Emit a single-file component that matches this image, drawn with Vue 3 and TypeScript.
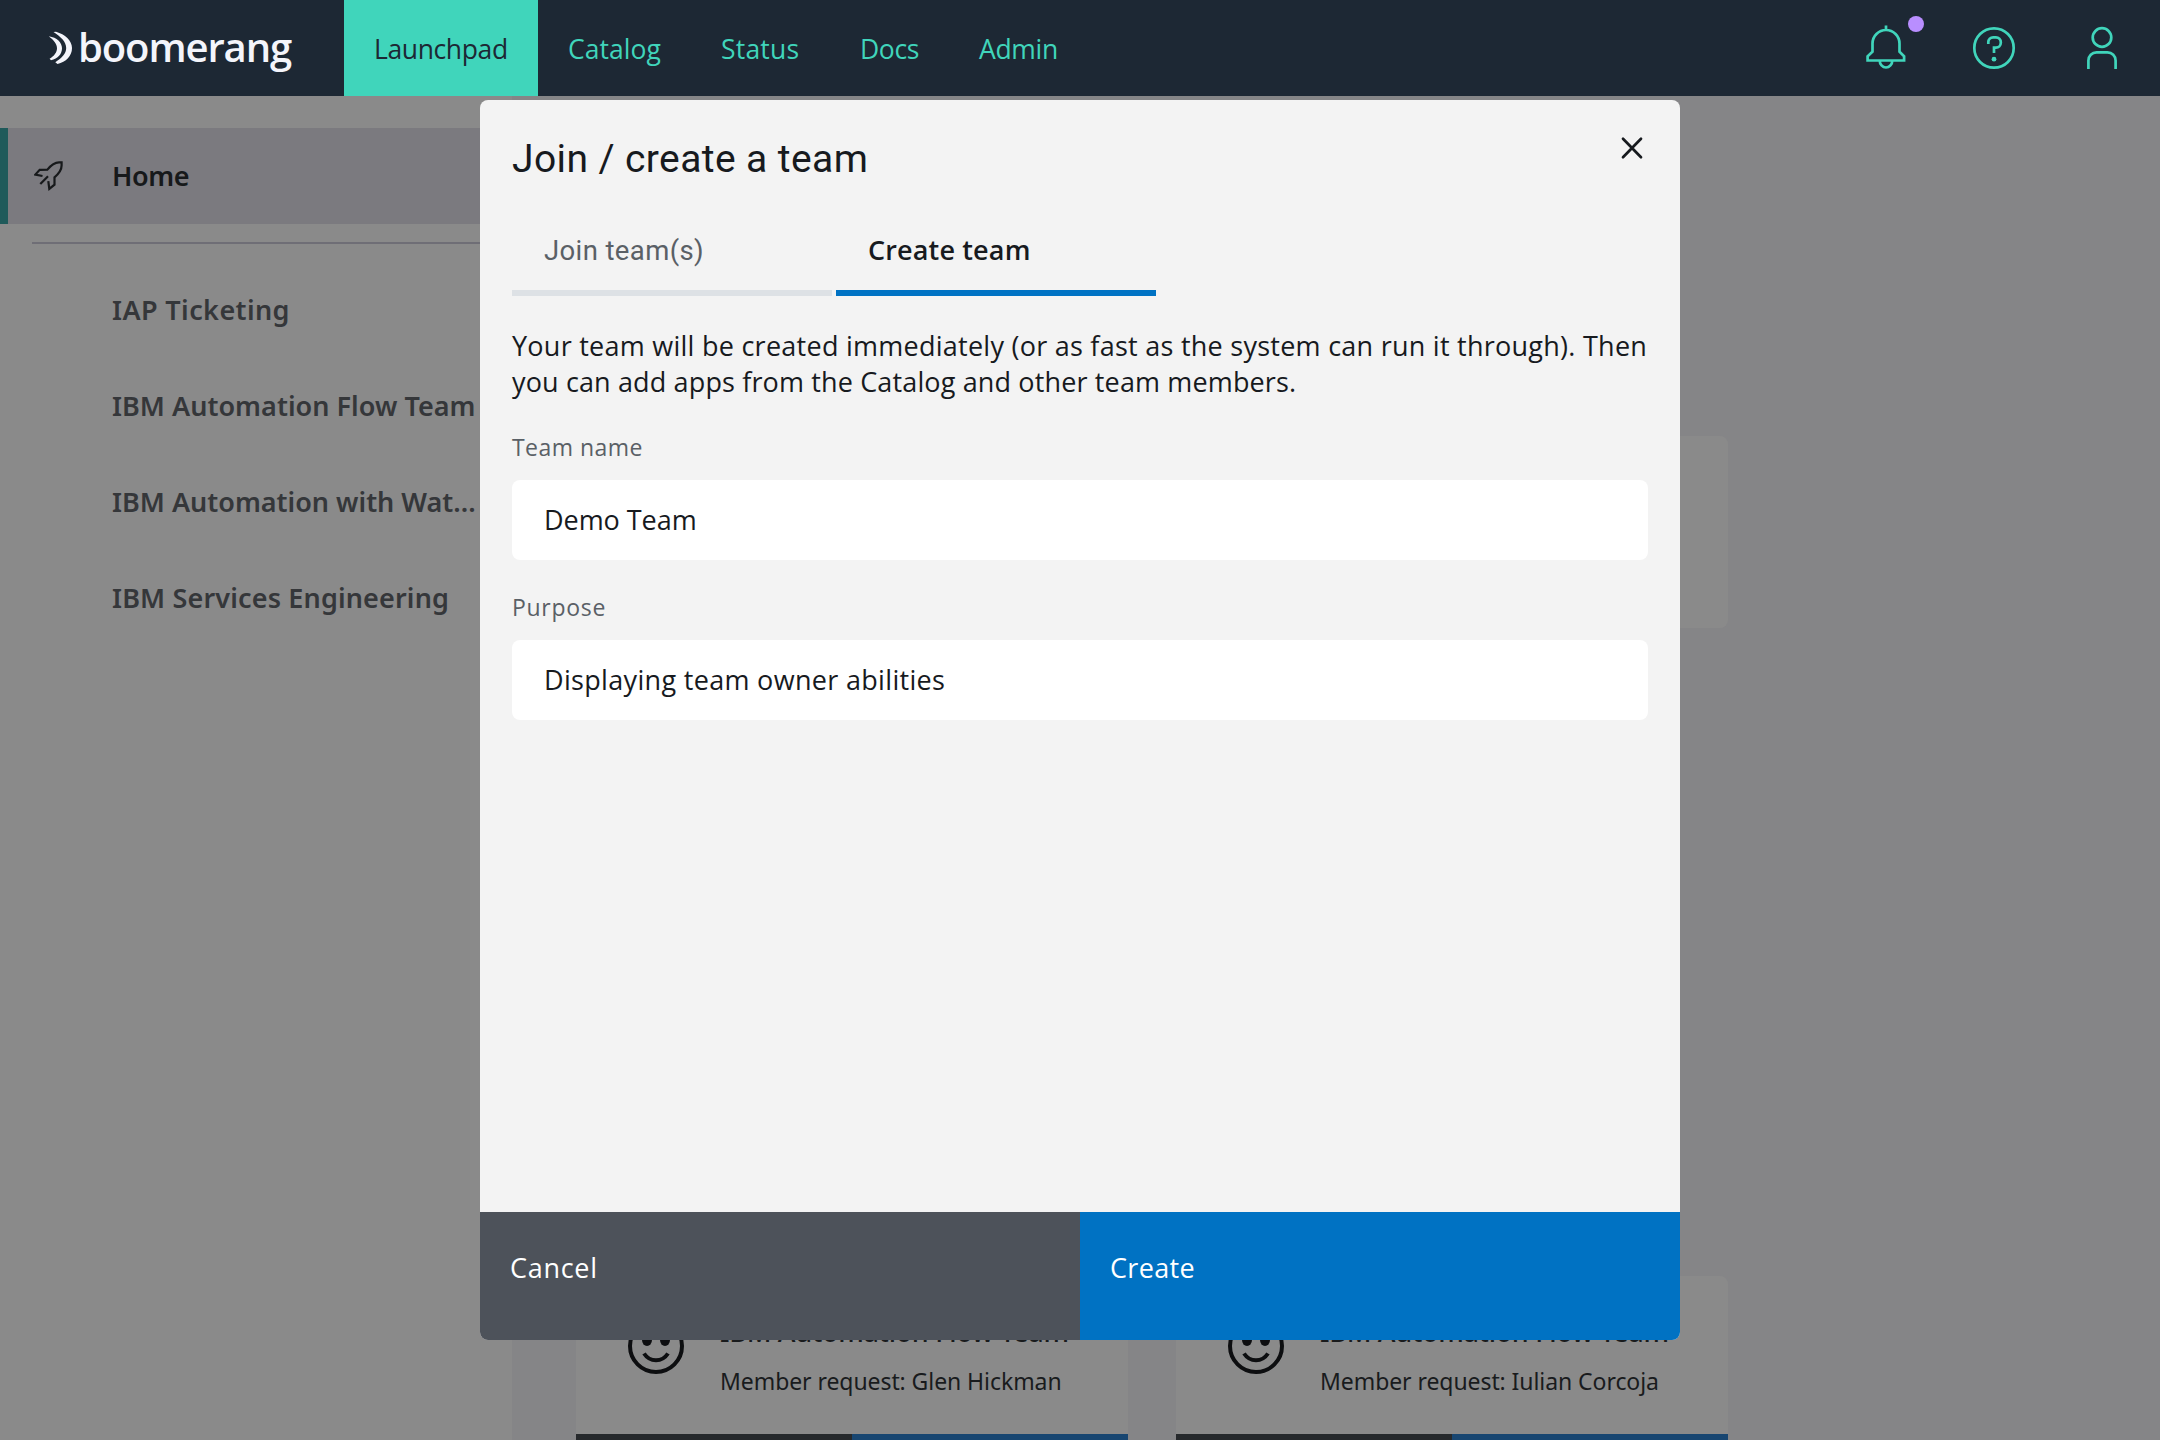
<script setup lang="ts">
import { ref } from 'vue'

interface Label {
  text: string
  tracking: number
}

const navItems: (Label & { width: number })[] = [
  { text: 'Launchpad', tracking: -0.38, width: 194 },
  { text: 'Catalog', tracking: 0.05, width: 153 },
  { text: 'Status', tracking: 0.2, width: 139 },
  { text: 'Docs', tracking: -0.37, width: 119 },
  { text: 'Admin', tracking: -0.3, width: 140 },
]

const teams: Label[] = [
  { text: 'IAP Ticketing', tracking: 0.4 },
  { text: 'IBM Automation Flow Team', tracking: 0.03 },
  { text: 'IBM Automation with Wat...', tracking: 0 },
  { text: 'IBM Services Engineering', tracking: 0.15 },
]

const requests = ['Member request: Glen Hickman', 'Member request: Iulian Corcoja']

const intro: Label[] = [
  {
    text: 'Your team will be created immediately (or as fast as the system can run it through). Then',
    tracking: 0.256,
  },
  { text: 'you can add apps from the Catalog and other team members.', tracking: 0.14 },
]

const fields = ref([
  { id: 'name', label: 'Team name', labelTracking: 0.45, value: 'Demo Team', tracking: -0.05 },
  { id: 'purpose', label: 'Purpose', labelTracking: 0.7, value: 'Displaying team owner abilities', tracking: 0.32 },
])

const spacing = (px: number) => ({ letterSpacing: `${px}px` })
</script>

<template>
  <div class="app">
    <header class="header">
      <div class="brand">
        <svg class="brand-mark" width="26" height="34" viewBox="0 0 26 34">
          <path d="M5.500 .9L8 .8C17 3.500 24 9.500 24 17C24 25 18 31 9.500 33L7.300 31.200C14 27 18.200 22.500 18.200 17C18.200 10.500 12.500 5.500 5.500 .9Z" />
          <path d="M.8 5.200C9 6.500 14 11.500 14 17.200C14 23 10 27.500 3 29.200L1.600 27.800C6 25 9 21.500 9 17.200C9 12.500 5.500 9 .8 5.200Z" />
        </svg>
        <span class="brand-name">boomerang</span>
      </div>
      <nav class="nav">
        <a
          v-for="(item, i) in navItems"
          :key="item.text"
          class="nav-item"
          :class="{ active: i === 0 }"
          :style="{ width: `${item.width}px`, letterSpacing: `${item.tracking}px` }"
        >{{ item.text }}</a>
      </nav>
      <div class="tools">
        <button class="tool" aria-label="Notifications">
          <svg width="48" height="48" viewBox="0 0 48 48">
            <path d="M24 1.500V6M10.500 19.500a13.500 13.500 0 0 1 27 0V27.700l4.600 4.700V36.500H5.600V32.400l4.900-4.700ZM17.700 36.500a6.200 6.900 0 0 0 12.600 0" />
          </svg>
          <span class="dot"></span>
        </button>
        <button class="tool" aria-label="Help">
          <svg width="48" height="48" viewBox="0 0 48 48">
            <circle cx="24" cy="24" r="19.700" />
            <path d="M18.300 20V18.200a4.900 4.900 0 0 1 4.900-4.900h2.700a4.900 4.900 0 0 1 4.900 4.900v.6a4.900 4.900 0 0 1-4.900 4.900H24v5.300" />
            <circle class="fill" cx="24" cy="35.200" r="2.400" />
          </svg>
        </button>
        <button class="tool" aria-label="Profile">
          <svg width="48" height="48" viewBox="0 0 48 48">
            <circle cx="24" cy="13.500" r="9.300" />
            <path d="M10.400 45V36.400a8.100 8.100 0 0 1 8.100-8.100h11a8.100 8.100 0 0 1 8.100 8.100V45" />
          </svg>
        </button>
      </div>
    </header>

    <div class="body">
      <aside class="sidebar">
        <a class="home">
          <svg class="rocket" width="30" height="30" viewBox="0 0 30 30">
            <path d="M8.500 15L1.300 13.600L5.700 8.800L13.400 8.600C17.500 3.500 21 1.300 25 1.300H27.600V4.500C27.600 9 25 12.500 20.500 16.300V23.600L15.300 27.800L14.300 20.200" />
            <path d="M14 15.300L6.300 23" />
          </svg>
          <span>Home</span>
        </a>
        <hr class="rule" />
        <a v-for="team in teams" :key="team.text" class="team" :style="spacing(team.tracking)">{{ team.text }}</a>
      </aside>

      <main class="main">
        <section class="panel"></section>
        <section class="requests">
          <article v-for="request in requests" :key="request" class="card">
            <div class="card-body">
              <svg class="smiley" width="60" height="60" viewBox="0 0 60 60">
                <circle cx="30" cy="30" r="26" />
                <ellipse class="eye" cx="21" cy="24" rx="5" ry="6" />
                <ellipse class="eye" cx="39" cy="24" rx="5" ry="6" />
                <path d="M18 37.500C24 46.500 36 46.500 42 37.500" />
              </svg>
              <div class="card-text">
                <h3>IBM Automation Flow Team</h3>
                <p>{{ request }}</p>
              </div>
            </div>
            <div class="card-actions"><span></span><span></span></div>
          </article>
        </section>
      </main>
    </div>

    <div class="modal" role="dialog" aria-label="Join / create a team">
      <div class="modal-content">
        <div class="modal-head">
          <h2>Join / create a team</h2>
          <button class="close" aria-label="Close">
            <svg width="24" height="24" viewBox="0 0 24 24"><path d="M3 2.800L21 21.200M21 2.800L3 21.200" /></svg>
          </button>
        </div>
        <div class="tabs">
          <button class="tab">Join team(s)</button>
          <button class="tab selected">Create team</button>
        </div>
        <p class="intro">
          <span v-for="line in intro" :key="line.text" :style="spacing(line.tracking)">{{ line.text }}</span>
        </p>
        <div v-for="field in fields" :key="field.id" class="field">
          <label :for="field.id" :style="spacing(field.labelTracking)">{{ field.label }}</label>
          <input :id="field.id" v-model="field.value" type="text" :style="spacing(field.tracking)" />
        </div>
      </div>
      <footer class="modal-actions">
        <button class="cancel">Cancel</button>
        <button class="create">Create</button>
      </footer>
    </div>
  </div>
</template>

<style>
body {
  margin: 0;
  background: #858587;
}
</style>

<style scoped>
.app {
  position: relative;
  display: flex;
  flex-direction: column;
  width: 2160px;
  height: 1440px;
  overflow: hidden;
  background: #858587;
  color: #171a1e;
  font-family: "Open Sans", "Noto Sans", sans-serif;
  font-size: 27px;
}

button,
input {
  border: 0;
  padding: 0;
  margin: 0;
  background: none;
  color: inherit;
  font: inherit;
  text-align: left;
}

svg {
  display: block;
}

.header {
  display: flex;
  flex: none;
  height: 96px;
  background: #1d2834;
}

.brand {
  box-sizing: border-box;
  display: flex;
  width: 344px;
  padding-left: 48px;
  color: #f4f5fb;
}

.brand-mark {
  margin-top: 31px;
  flex: none;
  fill: currentColor;
}

.brand-name {
  margin: -1px 0 0 4px;
  font-size: 40px;
  font-weight: 600;
  line-height: 96px;
  letter-spacing: -1.1px;
}

.nav {
  display: flex;
}

.nav-item {
  box-sizing: border-box;
  height: 96px;
  padding: 1px 0 0 30px;
  color: #40d5bb;
  font-size: 26.5px;
  font-weight: 500;
  line-height: 96px;
  white-space: nowrap;
}

.nav-item.active {
  background: #40d5bb;
  color: #1d2834;
}

.tools {
  display: flex;
  gap: 60px;
  margin-left: auto;
  padding: 24px 34px 0 0;
}

.tool {
  position: relative;
  width: 48px;
  height: 48px;
}

.tool svg {
  fill: none;
  stroke: #40d5bb;
  stroke-width: 2.7;
}

.tool svg .fill {
  fill: #40d5bb;
  stroke: none;
}

.dot {
  position: absolute;
  top: -8px;
  left: 46px;
  width: 16px;
  height: 16px;
  border-radius: 50%;
  background: #b98eff;
}

.body {
  display: flex;
  flex: 1;
  min-height: 0;
}

.sidebar {
  box-sizing: border-box;
  flex: none;
  width: 512px;
  padding-top: 32px;
  background: #8a8a8a;
  font-family: "Noto Sans", "Open Sans", sans-serif;
  font-weight: 600;
}

.home {
  display: flex;
  align-items: center;
  height: 96px;
  border-left: 8px solid #1f5a5a;
  background: #7b7a7f;
  color: #17191b;
  letter-spacing: -0.4px;
}

.home span {
  margin-left: 48px;
  padding-bottom: 2px;
}

.rocket {
  margin-left: 26px;
  fill: none;
  stroke: #17191b;
  stroke-width: 2.2;
}

.rule {
  height: 2px;
  margin: 18px 0 18px 32px;
  border: 0;
  background: #6f6e76;
}

.team {
  display: block;
  padding-left: 112px;
  color: #35373a;
  line-height: 96px;
  white-space: nowrap;
}

.main {
  flex: 1;
  padding: 340px 0 0 64px;
  font-family: "Noto Sans", "Open Sans", sans-serif;
}

.panel {
  width: 1152px;
  height: 192px;
  border-radius: 8px;
  background: #8a8a8a;
}

.requests {
  display: flex;
  gap: 48px;
  margin-top: 648px;
}

.card {
  width: 552px;
  border-radius: 8px 8px 0 0;
  background: #8a8a8a;
  overflow: hidden;
}

.card-body {
  box-sizing: border-box;
  display: flex;
  height: 158px;
  padding: 40px 0 0 50px;
}

.smiley {
  fill: none;
  stroke: #0d0e10;
  stroke-width: 4;
}

.smiley .eye {
  fill: #0d0e10;
  stroke: none;
}

.card-text {
  margin-left: 34px;
  color: #191b1d;
  white-space: nowrap;
}

.card-text h3 {
  margin: 0;
  font-size: 27px;
  font-weight: 500;
  line-height: 32px;
  letter-spacing: -0.29px;
}

.card-text p {
  margin: 17px 0 0;
  font-size: 23px;
  line-height: 32px;
  letter-spacing: -0.07px;
}

.card-actions {
  display: flex;
  height: 96px;
}

.card-actions span {
  flex: 1;
  background: #26292c;
}

.card-actions span + span {
  background: #184671;
}

.modal {
  position: absolute;
  top: 100px;
  left: 480px;
  display: flex;
  flex-direction: column;
  width: 1200px;
  height: 1240px;
  border-radius: 8px;
  background: #f3f3f3;
  overflow: hidden;
}

.modal-content {
  flex: 1;
  padding: 0 32px;
}

.modal-head {
  display: flex;
  justify-content: space-between;
  height: 112px;
}

.modal-head h2 {
  margin: 35px 0 0;
  font-family: Roboto, "Open Sans", sans-serif;
  font-size: 39px;
  font-weight: 400;
  line-height: 48px;
  letter-spacing: 0.4px;
}

.close {
  width: 24px;
  height: 24px;
  margin: 36px 4px 0 0;
}

.close svg {
  fill: none;
  stroke: #171a1e;
  stroke-width: 2.7;
  stroke-linecap: round;
}

.tabs {
  display: flex;
  gap: 4px;
  height: 84px;
}

.tab {
  box-sizing: border-box;
  width: 320px;
  padding: 0 0 2px 32px;
  border-bottom: 6px solid #dde1e5;
  color: #5a6066;
  font-family: Roboto, "Open Sans", sans-serif;
  font-size: 27.5px;
  letter-spacing: 0.38px;
}

.tab.selected {
  padding-bottom: 3px;
  border-color: #0072c3;
  color: #171a1e;
  font-family: "Open Sans", "Noto Sans", sans-serif;
  font-size: 27px;
  font-weight: 600;
  letter-spacing: 0.15px;
}

.intro {
  margin: 32px 0 0;
  line-height: 36px;
  white-space: nowrap;
}

.intro span {
  display: block;
}

.field {
  padding-top: 31px;
}

.field label {
  display: block;
  height: 49px;
  color: #5a6066;
  font-size: 23px;
  line-height: 32px;
}

.field input {
  box-sizing: border-box;
  display: block;
  width: 1136px;
  height: 80px;
  padding: 0 32px 2px;
  border-radius: 8px;
  background: #fff;
}

.modal-actions {
  display: flex;
  height: 128px;
}

.modal-actions button {
  flex: 1;
  padding: 0 0 17px 30px;
  background: #4d525a;
  color: #fff;
  letter-spacing: 0.7px;
}

.modal-actions .create {
  background: #0072c3;
  letter-spacing: 0.35px;
}
</style>
